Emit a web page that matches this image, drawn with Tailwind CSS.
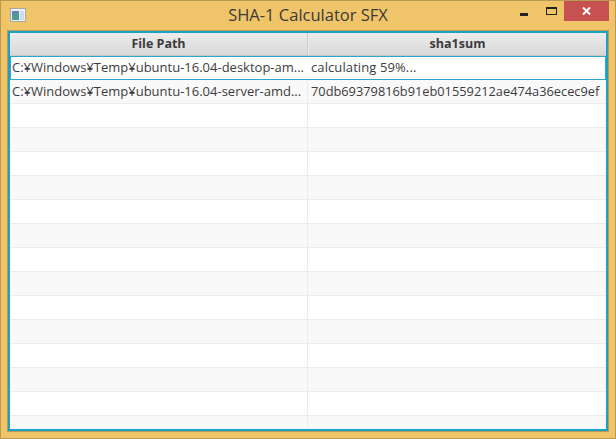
<!DOCTYPE html>
<html lang="en">

<head>
  <meta charset="UTF-8">
  <title>SHA-1 Calculator SFX</title>
  <script src="https://cdn.jsdelivr.net/npm/@tailwindcss/browser@4"></script>
</head>

<body class="bg-[#f0c569] overflow-hidden">
  <div class="w-[616px] h-[439px] flex flex-col border border-[#b89a52] font-['Open_Sans',sans-serif] text-[#3c3c3c]">
    <!-- title bar -->
    <div class="h-[29px] relative flex justify-center items-center text-[16.5px] text-[#3a3a3a]">
      <svg class="absolute left-[9px] top-[7px]" width="16" height="14" viewBox="0 0 16 14">
        <rect x="0.5" y="0.5" width="15" height="13" fill="#eef2f6" stroke="#a8a8a8" />
        <rect x="2" y="3" width="7" height="9" fill="#4f9a94" />
        <rect x="2" y="3" width="7" height="3" fill="#5d88b0" />
        <rect x="10" y="3" width="4" height="9" fill="#cfdde8" />
      </svg>
      <span>SHA-1 Calculator SFX</span>
      <div class="absolute left-[519px] top-[12px] w-[8px] h-[3px] bg-[#222]"></div>
      <div class="absolute left-[545px] top-[6px] w-[11px] h-[8px] border border-t-2 border-[#222]"></div>
      <div class="absolute left-[563px] top-0 w-[45px] h-[20px] bg-[#c75050] flex items-center justify-center">
        <svg width="9" height="8" viewBox="0 0 9 8">
          <path d="M1 0.5 L8 7.5 M8 0.5 L1 7.5" stroke="#fff" stroke-width="2" />
        </svg>
      </div>
    </div>

    <!-- table -->
    <div class="mx-[6px] h-[402px] border border-[#b89a52]">
      <div class="h-full border-2 border-[#1ba1c5] bg-white overflow-hidden text-[13px]">
        <div class="flex h-[23px] text-[12.5px] font-bold bg-gradient-to-b from-[#ececec] to-[#d8d8d8] border-b border-[#c8c8c8]">
          <div class="w-[298px] border-r border-[#c8c8c8] flex items-center justify-center">File Path</div>
          <div class="flex-1 flex items-center justify-center border-l border-[#f0f0f0]">sha1sum</div>
        </div>

        <div class="flex h-[24px] border border-[#2ba6d0] items-center bg-white">
          <div class="w-[297px] pl-[1px] whitespace-nowrap">C:¥Windows¥Temp¥ubuntu-16.04-desktop-am...</div>
          <div class="flex-1 pl-[3px] whitespace-nowrap tracking-[0.1px]">calculating 59%...</div>
        </div>
        <div class="flex h-[24px] items-center bg-[#f9f9f9] border-b border-[#ececec]">
          <div class="w-[298px] h-full flex items-center pl-[2px] border-r border-[#ececec] whitespace-nowrap">C:¥Windows¥Temp¥ubuntu-16.04-server-amd...</div>
          <div class="flex-1 pl-[3px] whitespace-nowrap text-[12.8px]">70db69379816b91eb01559212ae474a36ecec9ef</div>
        </div>

        <div class="flex h-[24px] bg-white border-b border-[#ececec]"><div class="w-[298px] border-r border-[#ececec]"></div></div>
        <div class="flex h-[24px] bg-[#f9f9f9] border-b border-[#ececec]"><div class="w-[298px] border-r border-[#ececec]"></div></div>
        <div class="flex h-[24px] bg-white border-b border-[#ececec]"><div class="w-[298px] border-r border-[#ececec]"></div></div>
        <div class="flex h-[24px] bg-[#f9f9f9] border-b border-[#ececec]"><div class="w-[298px] border-r border-[#ececec]"></div></div>
        <div class="flex h-[24px] bg-white border-b border-[#ececec]"><div class="w-[298px] border-r border-[#ececec]"></div></div>
        <div class="flex h-[24px] bg-[#f9f9f9] border-b border-[#ececec]"><div class="w-[298px] border-r border-[#ececec]"></div></div>
        <div class="flex h-[24px] bg-white border-b border-[#ececec]"><div class="w-[298px] border-r border-[#ececec]"></div></div>
        <div class="flex h-[24px] bg-[#f9f9f9] border-b border-[#ececec]"><div class="w-[298px] border-r border-[#ececec]"></div></div>
        <div class="flex h-[24px] bg-white border-b border-[#ececec]"><div class="w-[298px] border-r border-[#ececec]"></div></div>
        <div class="flex h-[24px] bg-[#f9f9f9] border-b border-[#ececec]"><div class="w-[298px] border-r border-[#ececec]"></div></div>
        <div class="flex h-[24px] bg-white border-b border-[#ececec]"><div class="w-[298px] border-r border-[#ececec]"></div></div>
        <div class="flex h-[24px] bg-[#f9f9f9] border-b border-[#ececec]"><div class="w-[298px] border-r border-[#ececec]"></div></div>
        <div class="flex h-[24px] bg-white border-b border-[#ececec]"><div class="w-[298px] border-r border-[#ececec]"></div></div>
        <div class="flex h-[24px] bg-[#f9f9f9]"><div class="w-[298px] border-r border-[#ececec]"></div></div>
      </div>
    </div>
  </div>
</body>

</html>
